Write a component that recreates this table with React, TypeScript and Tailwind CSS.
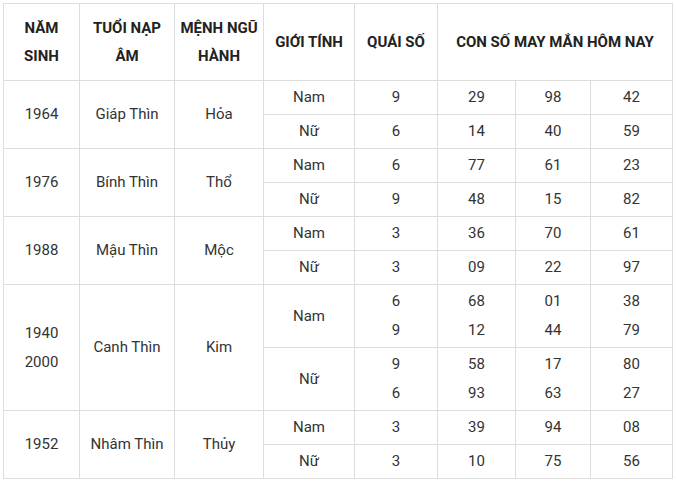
const rows = [
  {
    year: ["1964"],
    tuoi: "Giáp Thìn",
    menh: "Hỏa",
    sub: [
      { gt: "Nam", qs: ["9"], nums: [["29"], ["98"], ["42"]] },
      { gt: "Nữ", qs: ["6"], nums: [["14"], ["40"], ["59"]] },
    ],
  },
  {
    year: ["1976"],
    tuoi: "Bính Thìn",
    menh: "Thổ",
    sub: [
      { gt: "Nam", qs: ["6"], nums: [["77"], ["61"], ["23"]] },
      { gt: "Nữ", qs: ["9"], nums: [["48"], ["15"], ["82"]] },
    ],
  },
  {
    year: ["1988"],
    tuoi: "Mậu Thìn",
    menh: "Mộc",
    sub: [
      { gt: "Nam", qs: ["3"], nums: [["36"], ["70"], ["61"]] },
      { gt: "Nữ", qs: ["3"], nums: [["09"], ["22"], ["97"]] },
    ],
  },
  {
    year: ["1940", "2000"],
    tuoi: "Canh Thìn",
    menh: "Kim",
    sub: [
      { gt: "Nam", qs: ["6", "9"], nums: [["68", "12"], ["01", "44"], ["38", "79"]] },
      { gt: "Nữ", qs: ["9", "6"], nums: [["58", "93"], ["17", "63"], ["80", "27"]] },
    ],
  },
  {
    year: ["1952"],
    tuoi: "Nhâm Thìn",
    menh: "Thủy",
    sub: [
      { gt: "Nam", qs: ["3"], nums: [["39"], ["94"], ["08"]] },
      { gt: "Nữ", qs: ["3"], nums: [["10"], ["75"], ["56"]] },
    ],
  },
];

const cell = "border border-[#dddddd] text-center align-middle p-0";

function Lines({ items }: { items: string[] }) {
  return (
    <>
      {items.map((t, i) => (
        <div key={i} className="leading-[29px]">
          {t}
        </div>
      ))}
    </>
  );
}

export default function App() {
  return (
    <div className="bg-white w-[677px] h-[483px] pt-[3px] pl-[3px]">
      <table
        className="table-fixed border-collapse w-[669px] text-[15px] text-[#333333]"
        style={{ fontFamily: "Roboto, 'Liberation Sans', sans-serif" }}
      >
        <colgroup>
          <col className="w-[76px]" />
          <col className="w-[95px]" />
          <col className="w-[89px]" />
          <col className="w-[91px]" />
          <col className="w-[83px]" />
          <col className="w-[78px]" />
          <col className="w-[75px]" />
          <col className="w-[82px]" />
        </colgroup>
        <thead>
          <tr className="h-[77px] font-bold leading-[28px] text-[#222222]">
            <th className={cell}>NĂM<br />SINH</th>
            <th className={cell}>TUỔI NẠP<br />ÂM</th>
            <th className={cell}>MỆNH NGŨ<br />HÀNH</th>
            <th className={cell}>GIỚI TÍNH</th>
            <th className={cell}>QUÁI SỐ</th>
            <th className={cell} colSpan={3}>CON SỐ MAY MẮN HÔM NAY</th>
          </tr>
        </thead>
        <tbody>
          {rows.map((r) =>
            r.sub.map((s, i) => (
              <tr key={r.tuoi + s.gt} className={r.year.length > 1 ? "h-[63px]" : "h-[34px]"}>
                {i === 0 && (
                  <>
                    <td className={cell} rowSpan={2}>
                      <Lines items={r.year} />
                    </td>
                    <td className={cell} rowSpan={2}>{r.tuoi}</td>
                    <td className={cell} rowSpan={2}>{r.menh}</td>
                  </>
                )}
                <td className={cell}>{s.gt}</td>
                <td className={cell}>
                  <Lines items={s.qs} />
                </td>
                {s.nums.map((n, j) => (
                  <td key={j} className={cell}>
                    <Lines items={n} />
                  </td>
                ))}
              </tr>
            ))
          )}
        </tbody>
      </table>
    </div>
  );
}
